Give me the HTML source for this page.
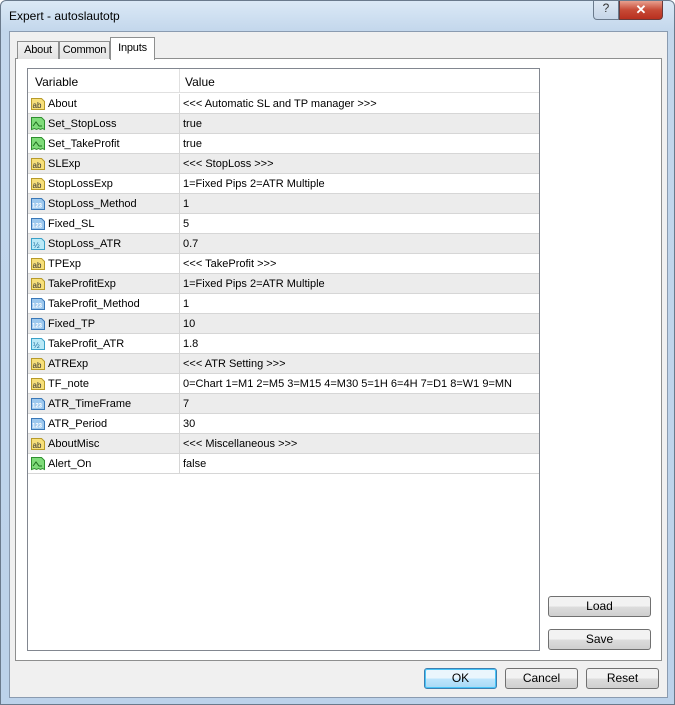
<!DOCTYPE html>
<html><head><meta charset="utf-8"><style>
*{margin:0;padding:0;box-sizing:border-box}
body{width:675px;height:705px;position:relative;overflow:hidden;font-family:"Liberation Sans",sans-serif;font-size:11px;color:#000;background:#fff}
.win{position:absolute;left:0;top:0;width:675px;height:705px;border:1px solid #6a7a8c;border-radius:6px 6px 0 0;background:linear-gradient(#dbe9f6,#c3d7ec 30px,#bcd2ea)}
.title{position:absolute;left:8px;top:8px;font-size:12px;color:#000}
.client{position:absolute;left:8px;top:30px;width:659px;height:667px;background:#f0f0f0;border:1px solid #8a9bb0}
.abs{position:absolute}
.tab{position:absolute;border:1px solid #8e8f8f;border-bottom:none;background:linear-gradient(#f2f2f2,#e3e3e3);font-size:11px;letter-spacing:-0.2px;text-align:center}
.panel{position:absolute;left:14px;top:57px;width:647px;height:603px;border:1px solid #8e8f8f;background:#fff}
.list{position:absolute;left:26px;top:67px;width:513px;height:583px;border:1px solid #828790;background:#fff}
.row{position:absolute;left:0;width:511px;height:20px;border-bottom:1px solid #d6d6d6}
.row.g{background:#ececec}
.row .n{position:absolute;left:20px;top:4px}
.row .v{position:absolute;left:155px;top:4px}
.row .d{position:absolute;left:151px;top:0;width:1px;height:20px;background:#d6d6d6}
.ic{position:absolute;left:2px;top:2px;width:16px;height:16px}
.btn{position:absolute;border:1px solid #707070;border-radius:3px;background:linear-gradient(#f2f2f2 50%,#dddddd 50%,#cfcfcf);text-align:center;font-size:12px;line-height:19px}
</style></head><body>
<div class="win">
<div class="title">Expert - autoslautotp</div>
<div class="abs" style="left:592px;top:0;width:26px;height:19px;border:1px solid #6a7a8c;border-top:none;border-radius:0 0 0 4px;background:linear-gradient(#dde8f3,#c6d6e8);text-align:center;font-size:12px;color:#333">?</div>
<div class="abs" style="left:618px;top:0;width:44px;height:19px;border:1px solid #6a3a3a;border-top:none;border-radius:0 0 4px 0;background:linear-gradient(#e8a08f,#c74a36 50%,#b8301f);text-align:center;color:#fff;font-weight:bold;font-size:13px;line-height:17px">✕</div>
<div class="client"></div>
<div class="panel"></div>
<div class="tab" style="left:16px;top:40px;width:42px;height:18px;line-height:17px">About</div>
<div class="tab" style="left:58px;top:40px;width:51px;height:18px;line-height:17px">Common</div>
<div class="tab" style="left:109px;top:36px;width:45px;height:23px;background:#fff;line-height:20px;z-index:2">Inputs</div>
<div class="list">
<div class="abs" style="left:0;top:0;width:511px;height:24px;border-bottom:1px solid #e0e0e0;font-size:12px">
<span class="abs" style="left:7px;top:6px">Variable</span>
<span class="abs" style="left:151px;top:0;width:1px;height:24px;background:#e0e0e0"></span>
<span class="abs" style="left:157px;top:6px">Value</span></div>
<div id="rows"></div>
</div>
<div class="btn" style="left:547px;top:595px;width:103px;height:21px">Load</div>
<div class="btn" style="left:547px;top:628px;width:103px;height:21px">Save</div>
<div class="btn" style="left:423px;top:667px;width:73px;height:21px;border-color:#3c7fb1;background:linear-gradient(#eaf6fd 50%,#bee6fd 50%,#a7d9f5);box-shadow:inset 0 0 0 1px #48c4f7">OK</div>
<div class="btn" style="left:504px;top:667px;width:73px;height:21px">Cancel</div>
<div class="btn" style="left:585px;top:667px;width:73px;height:21px">Reset</div>
</div>
<script>
var ab='<svg class="ic" viewBox="0 0 16 16"><path d="M1.5 2.5h10l3 3v8h-13z" fill="#f7e07a" stroke="#b79a2a"/><text x="2.5" y="12" font-size="8" font-family="Liberation Sans" fill="#333">ab</text></svg>';
var bo='<svg class="ic" viewBox="0 0 16 16"><path d="M1.5 1.5h10l3 3v9l-2-1-2 1-2-1-2 1-2-1-3 1z" fill="#7fdc7a" stroke="#2f8f2f"/><path d="M3 10l3-4 3 4h3" fill="none" stroke="#1f6f1f"/></svg>';
var nu='<svg class="ic" viewBox="0 0 16 16"><path d="M1.5 2.5h10l3 3v8h-13z" fill="#9cc8ee" stroke="#3a78b8"/><text x="2" y="11.5" font-size="6" font-weight="bold" font-family="Liberation Sans" fill="#fff">123</text></svg>';
var db='<svg class="ic" viewBox="0 0 16 16"><path d="M1.5 2.5h10l3 3v8h-13z" fill="#b9e9f7" stroke="#3aa0c8"/><text x="3" y="12" font-size="8" font-family="Liberation Sans" fill="#2070a0">½</text></svg>';
var R=[[ab,"About","<<< Automatic SL and TP manager >>>"],[bo,"Set_StopLoss","true"],[bo,"Set_TakeProfit","true"],[ab,"SLExp","<<< StopLoss >>>"],[ab,"StopLossExp","1=Fixed Pips  2=ATR Multiple"],[nu,"StopLoss_Method","1"],[nu,"Fixed_SL","5"],[db,"StopLoss_ATR","0.7"],[ab,"TPExp","<<< TakeProfit >>>"],[ab,"TakeProfitExp","1=Fixed Pips  2=ATR Multiple"],[nu,"TakeProfit_Method","1"],[nu,"Fixed_TP","10"],[db,"TakeProfit_ATR","1.8"],[ab,"ATRExp","<<< ATR Setting >>>"],[ab,"TF_note","0=Chart 1=M1 2=M5 3=M15 4=M30 5=1H 6=4H 7=D1 8=W1 9=MN"],[nu,"ATR_TimeFrame","7"],[nu,"ATR_Period","30"],[ab,"AboutMisc","<<< Miscellaneous >>>"],[bo,"Alert_On","false"]];
var h="";function e(s){return s.replace(/&/g,"&amp;").replace(/</g,"&lt;").replace(/>/g,"&gt;")}
R.forEach(function(r,i){h+='<div class="row'+(i%2?' g':'')+'" style="top:'+(25+i*20)+'px">'+r[0]+'<span class="n">'+r[1]+'</span><span class="d"></span><span class="v">'+e(r[2])+'</span></div>'});
document.getElementById("rows").innerHTML=h;
</script>
</body></html>
